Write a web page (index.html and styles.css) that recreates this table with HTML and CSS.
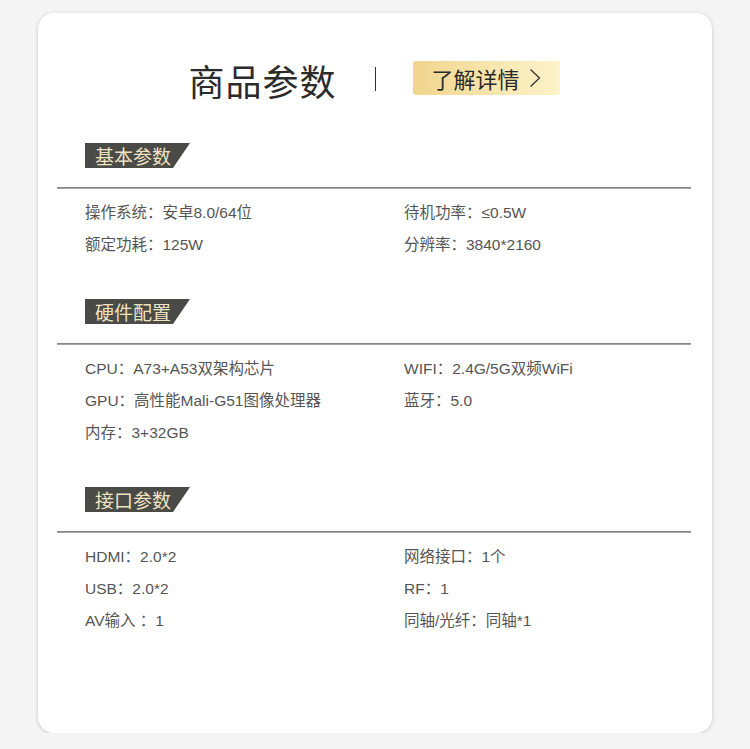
FILE: index.html
```html
<!DOCTYPE html>
<html lang="zh-CN">
<head>
  <meta charset="UTF-8">
  <meta name="viewport" content="width=device-width, initial-scale=1.0">
  <title>商品参数</title>
  <link rel="stylesheet" href="styles.css">
</head>
<body>

<div class="card">
  <!-- Header -->
  <div class="header">
    <h1 class="title">商品参数</h1>
    <span class="divider"></span>
    <a class="more-btn" href="#">
      了解详情
      <svg class="chevron" width="12" height="20" viewBox="0 0 12 20">
        <polyline points="1.5,1.5 10.5,10 1.5,18.5" fill="none" stroke="#333" stroke-width="1.3"/>
      </svg>
    </a>
  </div>

  <!-- 基本参数 -->
  <div class="section first">
    <div class="tag">基本参数</div>
    <div class="rule"></div>
    <div class="specs">
      <div class="col">
        <p>操作系统：安卓8.0/64位</p>
        <p>额定功耗：125W</p>
      </div>
      <div class="col">
        <p>待机功率：≤0.5W</p>
        <p>分辨率：3840*2160</p>
      </div>
    </div>
  </div>

  <!-- 硬件配置 -->
  <div class="section">
    <div class="tag">硬件配置</div>
    <div class="rule"></div>
    <div class="specs">
      <div class="col">
        <p>CPU：A73+A53双架构芯片</p>
        <p>GPU：高性能Mali-G51图像处理器</p>
        <p>内存：3+32GB</p>
      </div>
      <div class="col">
        <p>WIFI：2.4G/5G双频WiFi</p>
        <p>蓝牙：5.0</p>
      </div>
    </div>
  </div>

  <!-- 接口参数 -->
  <div class="section">
    <div class="tag">接口参数</div>
    <div class="rule"></div>
    <div class="specs">
      <div class="col">
        <p>HDMI：2.0*2</p>
        <p>USB：2.0*2</p>
        <p>AV输入 ：1</p>
      </div>
      <div class="col">
        <p>网络接口：1个</p>
        <p>RF：1</p>
        <p>同轴/光纤：同轴*1</p>
      </div>
    </div>
  </div>
</div>

</body>
</html>
```

FILE: styles.css
```css
/* Page */
body {
  margin: 0;
  padding: 13px 0 0;
  background-color: #f4f4f4;
  font-family: "Liberation Sans", "Noto Sans CJK SC", sans-serif;
}
.card {
  width: 674px;
  height: 720px;
  margin: 0 auto;
  background-color: #fff;
  border-radius: 16px;
  box-shadow: 0 1px 4px rgba(0, 0, 0, 0.18);
  box-sizing: border-box;
  padding: 48px 21px 0 19px;
}

/* Header */
.header {
  display: flex;
  justify-content: center;
  align-items: center;
  height: 34px;
}
.title {
  margin: 4px 0 0;
  font-family: "Noto Sans CJK SC", sans-serif;
  font-size: 36px;
  font-weight: normal;
  color: #2b2b2b;
  letter-spacing: 1px;
  line-height: 1;
}
.divider {
  width: 1px;
  height: 24px;
  background-color: #333;
  margin: 2px 37px 0 38px;
}
.more-btn {
  display: flex;
  align-items: center;
  gap: 9px;
  height: 34px;
  padding: 0 19px 0 19px;
  border-radius: 3px;
  background: linear-gradient(90deg, #f0d58c 0%, #f8e6b0 55%, #fdf2c9 100%);
  font-family: "Noto Sans CJK SC", sans-serif;
  font-size: 22px;
  color: #2a2a2a;
  text-decoration: none;
}

/* Sections */
.section {
  margin-top: 38px;
}
.section.first {
  margin-top: 48px;
}
.tag {
  width: 105px;
  height: 25px;
  margin-left: 28px;
  padding-left: 10px;
  box-sizing: border-box;
  background-color: #4a4a47;
  color: #efe2c2;
  font-family: "Noto Sans CJK SC", sans-serif;
  font-size: 19px;
  line-height: 25px;
  clip-path: polygon(0 0, 100% 0, calc(100% - 17px) 100%, 0 100%);
}
.rule {
  height: 2px;
  margin-top: 19px;
  background: linear-gradient(#7a7a7a, #b0b0b0);
}
.specs {
  display: grid;
  grid-template-columns: 319px 1fr;
  padding: 8px 0 0 28px;
}
.col p {
  margin: 0;
  font-size: 15.5px;
  line-height: 32px;
  color: #555;
}
```
